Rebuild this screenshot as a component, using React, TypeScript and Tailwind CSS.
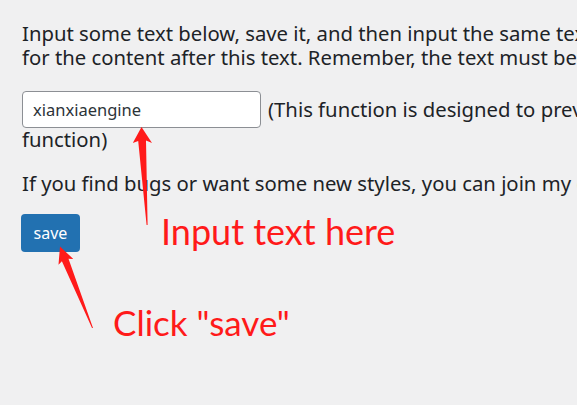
import React from "react";

const FONT = { fontFamily: '"Noto Sans", "Open Sans", sans-serif' };
const NOTE = { fontFamily: 'Lato, "Noto Sans", sans-serif' };

function Arrows() {
  return (
    <svg
      className="pointer-events-none absolute inset-0"
      width={577}
      height={405}
      viewBox="0 0 577 405"
    >
      {/* arrow pointing at the input */}
      <polygon
        fill="#ff1a1a"
        points="141.5,127 152,143 146,140.5 147.6,225 146.6,225 138.2,141 132.8,143"
      />
      {/* arrow pointing at the save button */}
      <polygon
        fill="#ff1a1a"
        points="60,246.5 73.3,259 68.5,258.7 93,328 92,328 61.9,261.3 58.5,264.8"
      />
    </svg>
  );
}

export default function App() {
  return (
    <div
      className="relative h-[405px] w-[577px] overflow-hidden bg-[#f0f0f1] text-[#1d2327]"
      style={FONT}
    >
      <div className="pl-[22px] pt-[20.5px] text-[20.3px] leading-[24.5px]">
        <p className="whitespace-nowrap">
          Input some text below, save it, and then input the same text
          <br />
          for the content after this text. Remember, the text must be unique.
        </p>

        <div className="mt-[21.5px] flex items-center gap-[7px] whitespace-nowrap">
          <input
            className="h-[37px] w-[239px] shrink-0 rounded-[4px] border border-[#8c8f94] bg-white pl-[10px] text-[16.5px] text-[#2c3338] outline-none"
            style={FONT}
            defaultValue="xianxiaengine"
          />
          <span>(This function is designed to prevent repeated content in this</span>
        </div>
        <p className="-mt-px whitespace-nowrap">function)</p>

        <p className="mt-[19px] whitespace-nowrap">
          If you find bugs or want some new styles, you can join my group.
        </p>

        <button
          className="-ml-px mt-[19px] h-[38px] w-[59px] rounded-[4px] bg-[#2271b1] text-[16px] leading-none text-white"
          style={FONT}
        >
          save
        </button>
      </div>

      <div
        className="absolute left-[161px] top-[213px] text-[36px] leading-none text-[#ff1a1a]"
        style={NOTE}
      >
        Input text here
      </div>
      <div
        className="absolute left-[113px] top-[304.5px] text-[35px] leading-none text-[#ff1a1a]"
        style={NOTE}
      >
        Click "save"
      </div>

      <Arrows />
    </div>
  );
}
